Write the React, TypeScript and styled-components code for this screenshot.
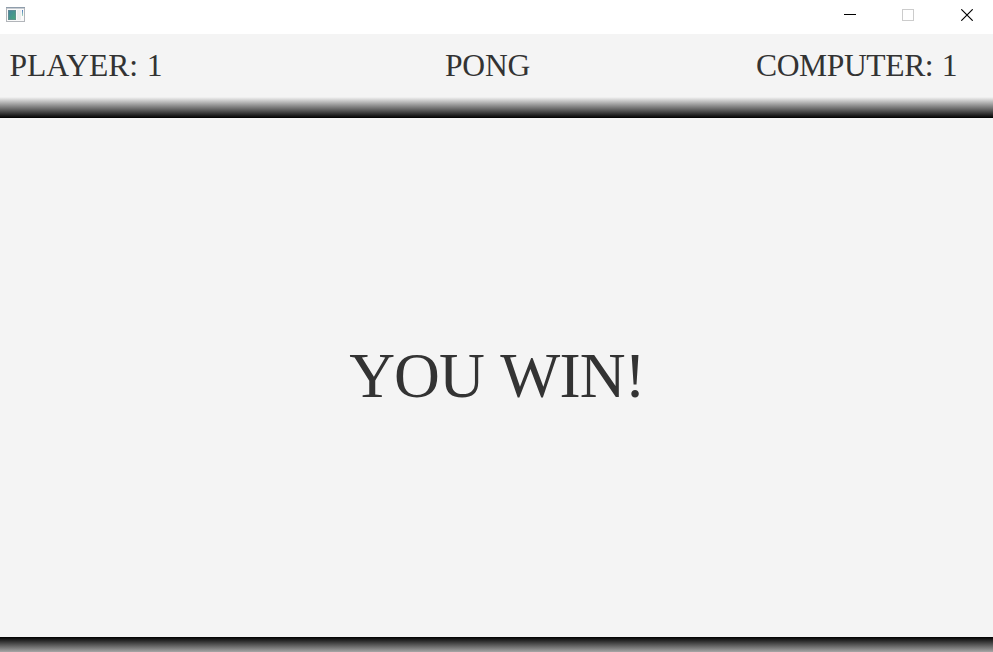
import React from "react";
import styled, { createGlobalStyle } from "styled-components";

const GlobalStyle = createGlobalStyle`
  html, body { margin: 0; padding: 0; overflow: hidden; background: #f4f4f4; }
`;

const Window = styled.main`
  display: flex;
  flex-direction: column;
  width: 993px;
  height: 652px;
  overflow: hidden;
  background: #f4f4f4;
  color: #333333;
  font-family: "Liberation Serif", "Times New Roman", serif;
`;

const TitleBar = styled.header`
  display: flex;
  justify-content: space-between;
  flex: 0 0 34px;
  background: #ffffff;
`;

const AppIcon = styled.svg`
  display: block;
  margin: 7px 0 0 6px;
`;

const Controls = styled.div`
  display: flex;
  margin-right: -3px;
`;

const ControlButton = styled.button`
  display: flex;
  align-items: center;
  justify-content: center;
  width: 58.5px;
  height: 30px;
  padding: 0;
  border: 0;
  background: transparent;
`;

const ScoreBar = styled.section`
  display: grid;
  grid-template-columns: 445px 311px 1fr;
  flex: 0 0 63px;
`;

const Label = styled.span<{ $inset?: number; $tracking: number }>`
  padding-left: ${({ $inset = 0 }) => $inset}px;
  font-size: 31.6px;
  letter-spacing: ${({ $tracking }) => $tracking}px;
  word-spacing: 1px;
  line-height: 63px;
  white-space: pre;
`;

const Wall = styled.div<{ $height: number; $fill: string }>`
  flex: 0 0 ${({ $height }) => $height}px;
  background: ${({ $fill }) => $fill};
`;

const Court = styled.section`
  display: flex;
  align-items: center;
  justify-content: center;
  flex: 1;
`;

const Result = styled.h1`
  margin: 0;
  padding: 0 0 3px 1px;
  font-size: 63.5px;
  font-weight: 400;
  letter-spacing: -0.9px;
  word-spacing: 2.5px;
  line-height: 74px;
  white-space: pre;
`;

export default function App() {
  return (
    <Window>
      <GlobalStyle />
      <TitleBar>
        <AppIcon width="19" height="15" viewBox="0 0 19 15">
          <defs>
            <linearGradient id="pane" x1="0" y1="0" x2="1" y2="1">
              <stop offset="0" stopColor="#4682a0" />
              <stop offset="1" stopColor="#48a878" />
            </linearGradient>
            <linearGradient id="strip" x1="0" y1="0" x2="0" y2="1">
              <stop offset="0" stopColor="#4a78c0" />
              <stop offset="1" stopColor="#a5d8b8" />
            </linearGradient>
          </defs>
          <rect x="0.5" y="0.5" width="18" height="14" fill="#fafafa" stroke="#b2b5ba" />
          <path d="M0 .5H19" stroke="#8f9dab" />
          <path d="M1 1.5H18" stroke="#c8cdd3" />
          <rect x="2" y="3" width="8" height="10" fill="url(#pane)" />
          <rect x="2.5" y="3.5" width="7" height="9" fill="none" stroke="#708b95" strokeOpacity=".6" />
          <rect x="11" y="3" width="4" height="10" fill="#eeeeee" />
          <rect x="16" y="3" width="1" height="6" fill="url(#strip)" />
        </AppIcon>
        <Controls>
          <ControlButton aria-label="Minimize">
            <svg width="12" height="12" shapeRendering="crispEdges">
              <rect y="5" width="12" height="1" fill="#000" />
            </svg>
          </ControlButton>
          <ControlButton aria-label="Maximize" disabled>
            <svg width="12" height="12" shapeRendering="crispEdges">
              <rect x=".5" y=".5" width="11" height="11" fill="none" stroke="#ccc" />
            </svg>
          </ControlButton>
          <ControlButton aria-label="Close">
            <svg width="12" height="12">
              <path d="M.3.3 11.7 11.7M11.7.3.3 11.7" stroke="#000" strokeWidth="1.15" />
            </svg>
          </ControlButton>
        </Controls>
      </TitleBar>
      <ScoreBar>
        <Label $inset={9.6} $tracking={-0.05}>PLAYER: 1</Label>
        <Label $tracking={-0.25}>PONG</Label>
        <Label $tracking={-0.4}>COMPUTER: 1</Label>
      </ScoreBar>
      <Wall $height={21} $fill="linear-gradient(#f4f4f4, #000 21px)" />
      <Court>
        <Result>YOU WIN!</Result>
      </Court>
      <Wall $height={15} $fill="linear-gradient(#000, #f4f4f4 22px)" />
    </Window>
  );
}
